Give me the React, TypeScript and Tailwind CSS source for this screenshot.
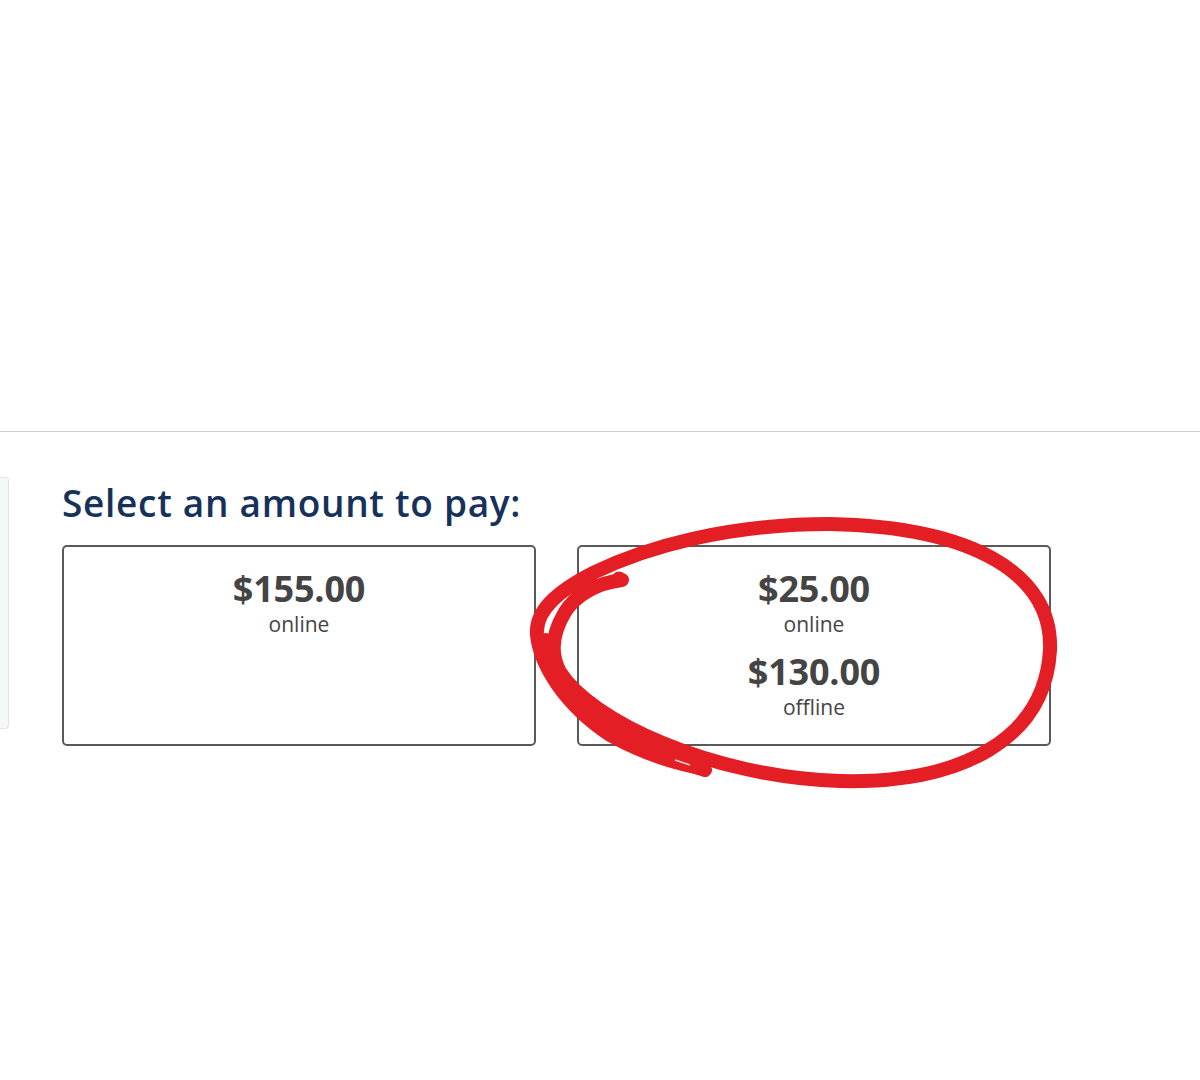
const font = { fontFamily: '"Open Sans", "Liberation Sans", sans-serif' }

interface PayOption {
  amount: string
  label: string
}

function AmountCard({ options }: { options: PayOption[] }) {
  return (
    <button className="flex h-[201px] w-[474px] flex-col items-center justify-start gap-[13px] rounded-[5px] border-2 border-[#595959] bg-white pt-[22px] text-[#444]">
      {options.map((o) => (
        <div key={o.amount + o.label} className="flex flex-col items-center">
          <span className="text-[36px] font-bold leading-[40px] tracking-[-0.2px]">{o.amount}</span>
          <span className="text-[21px] leading-[30px]">{o.label}</span>
        </div>
      ))}
    </button>
  )
}

// hand-drawn red circle around the split payment
function Scribble() {
  return (
    <svg
      className="pointer-events-none absolute left-0 top-0"
      width="1200"
      height="1080"
      viewBox="0 0 1200 1080"
      fill="none"
    >
      <g stroke="#e31e24" strokeWidth="14" strokeLinecap="round" strokeLinejoin="round">
        <path d="M 622 580 C 596 583 575 596 565 612 C 553 632 549 652 560 672 C 590 720 710 777 840 781 C 960 784 1045 740 1050 650 C 1053 575 975 527 830 524 C 725 524 645 548 595 572 C 555 592 535 612 537 635 C 540 665 565 705 610 735 C 640 752 670 762 700 768" />
        <path d="M 546 640 C 548 672 585 715 640 745 C 665 757 685 764 705 770" />
      </g>
      <circle cx="619" cy="579" r="7.5" fill="#e31e24" />
      <path d="M 933 547 C 960 556 985 566 1007 580" stroke="#ffffff" strokeOpacity="0.8" strokeWidth="1.2" />
      <path d="M 675 760 L 690 765" stroke="#ffffff" strokeOpacity="0.8" strokeWidth="1.5" />
    </svg>
  )
}

export default function App() {
  return (
    <div className="relative min-h-[1080px] w-full bg-white" style={font}>
      <div className="h-[431px]" />
      <div className="border-t border-[#cfcfcf] pt-[45px]">
        <div className="flex items-start gap-[53px]">
          <div className="h-[252px] w-[9px] rounded-r-[4px] border border-l-0 border-[#e2e4e4] bg-[#f6f7f7]" />
          <div className="mt-[4px] flex flex-col">
            <h2 className="text-[37px] font-semibold leading-[44px] tracking-[0.7px] text-[#17325a]">
              Select an amount to pay:
            </h2>
            <div className="mt-[20px] flex gap-[41px]">
              <AmountCard options={[{ amount: '$155.00', label: 'online' }]} />
              <AmountCard
                options={[
                  { amount: '$25.00', label: 'online' },
                  { amount: '$130.00', label: 'offline' },
                ]}
              />
            </div>
          </div>
        </div>
      </div>
      <Scribble />
    </div>
  )
}
